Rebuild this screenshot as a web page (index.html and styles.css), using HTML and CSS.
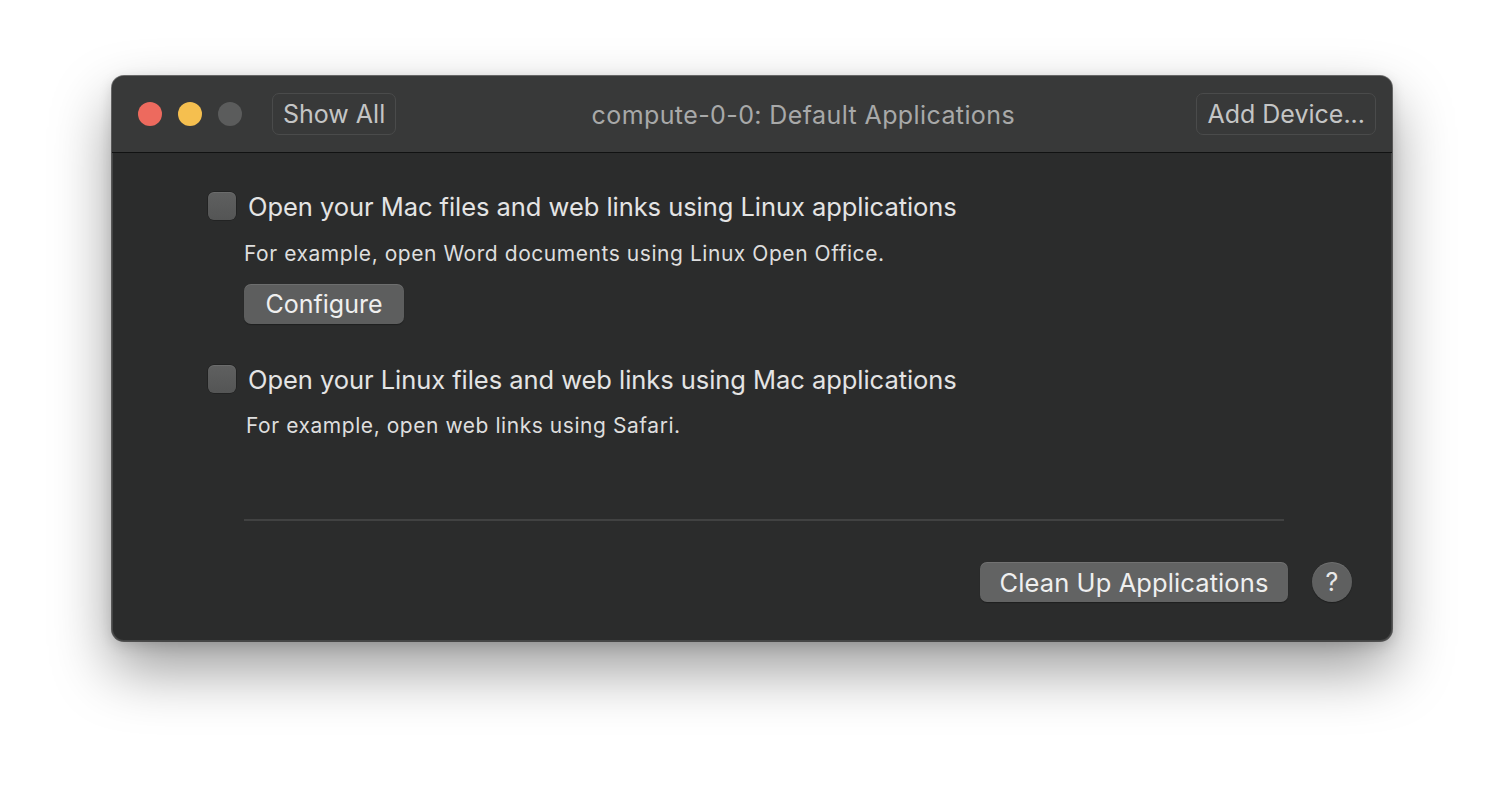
FILE: index.html
```html
<!DOCTYPE html>
<html>
<head>
<meta charset="utf-8">
<link rel="stylesheet" href="styles.css">
</head>
<body>
<div class="window">
  <div class="titlebar">
    <div class="lights">
      <span class="light red"></span>
      <span class="light yellow"></span>
      <span class="light gray"></span>
    </div>
    <div class="tbtn">Show All</div>
    <div class="title">compute-0-0: Default Applications</div>
    <div class="tbtn">Add Device...</div>
  </div>
  <div class="content">
    <div class="row">
      <span class="check"></span>
      <span class="label">Open your Mac files and web links using Linux applications</span>
    </div>
    <div class="sub sub1">For example, open Word documents using Linux Open Office.</div>
    <div class="btn configure">Configure</div>
    <div class="row row2">
      <span class="check"></span>
      <span class="label">Open your Linux files and web links using Mac applications</span>
    </div>
    <div class="sub sub2">For example, open web links using Safari.</div>
    <div class="sep"></div>
    <div class="footer">
      <div class="btn cleanup">Clean Up Applications</div>
      <div class="help">?</div>
    </div>
  </div>
</div>
</body>
</html>
```
FILE: styles.css
```css
html, body {
  margin: 0;
  padding: 0;
  background: #ffffff;
  min-height: 790px;
}
body {
  padding: 76px 0 0 112px;
  box-sizing: border-box;
  font-family: Inter, "Liberation Sans", sans-serif;
  -webkit-font-smoothing: antialiased;
}
.window {
  width: 1280px;
  height: 565px;
  border-radius: 12px;
  background: #2b2c2c;
  box-shadow: 0 0 0 1px rgba(0,0,0,0.55), inset 0 0 0 1px rgba(255,255,255,0.12), 0 28px 60px rgba(0,0,0,0.40), 0 4px 14px rgba(0,0,0,0.15);
  overflow: hidden;
  display: flex;
  flex-direction: column;
}
.titlebar {
  height: 77px;
  background: #383939;
  border-bottom: 1px solid #111212;
  display: flex;
  align-items: center;
  padding: 0 16px 0 26px;
  box-sizing: border-box;
  flex: none;
}
.lights {
  display: flex;
  gap: 16px;
  margin-right: 30px;
}
.light {
  width: 24px;
  height: 24px;
  border-radius: 50%;
  display: block;
}
.red { background: #ed6a5e; }
.yellow { background: #f5bf4f; }
.gray { background: #5b5c5c; }
.tbtn {
  height: 42px;
  box-sizing: border-box;
  border: 1px solid #4a4b4b;
  border-radius: 7px;
  padding: 0 10px;
  display: flex;
  align-items: center;
  color: #c4c5c5;
  font-size: 25px;
}
.title {
  flex: 1;
  text-align: center;
  color: #a8a9a9;
  font-size: 25px;
  letter-spacing: 0.4px;
  padding-top: 2px;
  padding-left: 14px;
}
.content {
  padding: 39px 40px 0 96px;
  display: flex;
  flex-direction: column;
  color: #e2e2e2;
}
.row {
  display: flex;
  align-items: center;
  height: 28px;
}
.row2 { margin-top: 41px; }
.check {
  width: 28px;
  height: 28px;
  box-sizing: border-box;
  border-radius: 6px;
  background: linear-gradient(#5f6060, #545555);
  box-shadow: inset 0 1px 0 rgba(255,255,255,0.08), 0 0 0 0.5px rgba(0,0,0,0.4);
  margin-right: 12px;
  flex: none;
}
.label {
  font-size: 25.5px;
  letter-spacing: -0.05px;
  color: #e4e4e4;
}
.sub {
  font-size: 21px;
  letter-spacing: 0.55px;
  line-height: 26px;
  color: #dedede;
  margin-left: 36px;
}
.sub1 { margin-top: 21px; }
.sub2 { margin-top: 20px; margin-left: 38px; }
.btn {
  height: 40px;
  box-sizing: border-box;
  border-radius: 7px;
  background: #5d5e5e;
  box-shadow: inset 0 1px 0 rgba(255,255,255,0.1), 0 1px 1px rgba(0,0,0,0.3);
  color: #efefef;
  font-size: 25px;
  display: flex;
  align-items: center;
  justify-content: center;
}
.configure {
  width: 160px;
  margin-left: 36px;
  margin-top: 17px;
}
.sep {
  height: 2px;
  background: #414242;
  margin-left: 36px;
  width: 1040px;
  margin-top: 80px;
}
.footer {
  display: flex;
  justify-content: flex-end;
  align-items: center;
  margin-top: 41px;
  gap: 24px;
}
.cleanup {
  width: 308px;
  background: #626363;
  font-size: 25.5px;
  letter-spacing: 0.1px;
}
.help {
  width: 40px;
  height: 40px;
  border-radius: 50%;
  background: #5f6060;
  box-shadow: inset 0 1px 0 rgba(255,255,255,0.1), 0 1px 1px rgba(0,0,0,0.3);
  color: #e8e8e8;
  font-size: 25px;
  display: flex;
  align-items: center;
  justify-content: center;
}
```
